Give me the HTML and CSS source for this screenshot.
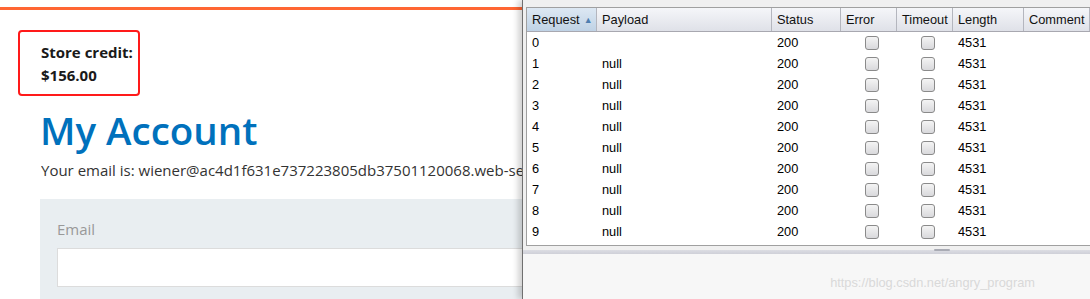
FILE: index.html
```html
<!DOCTYPE html>
<html lang="en">
<head>
  <meta charset="UTF-8" />
  <title>My Account - Intruder results</title>
  <link rel="stylesheet" href="styles.css">
</head>
<body>
  <!-- Lab page, left side -->
  <div class="page">
    <div class="top-line"></div>
    <div class="credit">
      <p>Store credit:</p>
      <p>$156.00</p>
    </div>
    <h1>My Account</h1>
    <p class="email">Your email is: wiener@ac4d1f631e737223805db37501120068.web-security-academy.net</p>
    <div class="panel">
      <label>Email</label>
      <div class="input"></div>
    </div>
  </div>

  <!-- Intruder results window -->
  <div class="window">
    <div class="results">
      <div class="row head">
        <div class="cell sorted">Request <span class="arrow">▲</span></div>
        <div class="cell">Payload</div>
        <div class="cell">Status</div>
        <div class="cell">Error</div>
        <div class="cell">Timeout</div>
        <div class="cell">Length</div>
        <div class="cell">Comment</div>
      </div>
      <div id="rows"></div>
    </div>
    <div class="splitter"><span class="grip"></span></div>
    <div class="lower">
      <span class="mark">https://blog.csdn.net/angry_program</span>
    </div>
  </div>

  <script>
    const rows = document.getElementById("rows");
    for (let i = 0; i < 10; i++) {
      const row = document.createElement("div");
      row.className = "row";
      row.innerHTML =
        '<div class="cell">' + i + '</div>' +
        '<div class="cell">' + (i === 0 ? '' : 'null') + '</div>' +
        '<div class="cell">200</div>' +
        '<div class="cell check"><span class="box"></span></div>' +
        '<div class="cell check"><span class="box"></span></div>' +
        '<div class="cell">4531</div>' +
        '<div class="cell"></div>';
      rows.appendChild(row);
    }
  </script>
</body>
</html>
```

FILE: styles.css
```css
* {
  box-sizing: border-box;
  margin: 0;
  padding: 0;
}

body {
  width: 1090px;
  height: 299px;
  overflow: hidden;
  display: flex;
  background: #fff;
}

/* Lab page */
.page {
  width: 522px;
  flex-shrink: 0;
  overflow: hidden;
  font-family: "Open Sans", sans-serif;
  color: #333;
}

.top-line {
  margin-top: 7px;
  height: 3px;
  background: #ff6633;
}

.credit {
  margin: 20px 0 0 18px;
  width: 122px;
  height: 66px;
  border: 2.5px solid #ff1a1a;
  border-radius: 4px;
  padding: 9px 0 0 21px;
  font-weight: 700;
  font-size: 15px;
  line-height: 23px;
  color: #1a1a1a;
  white-space: nowrap;
}

h1 {
  margin: 11px 0 0 40px;
  font-size: 38.5px;
  font-weight: 600;
  line-height: 46px;
  color: #0071bc;
  white-space: nowrap;
}

.email {
  margin: 5px 0 0 41px;
  font-size: 15px;
  line-height: 24px;
  white-space: nowrap;
  overflow: hidden;
}

.panel {
  margin: 17px 0 0 40px;
  height: 110px;
  background: #e9eef1;
  padding: 18px 0 0 17px;
}

.panel label {
  display: block;
  font-size: 15px;
  color: #999;
  line-height: 24px;
}

.input {
  margin-top: 7px;
  height: 39px;
  background: #fff;
  border: 1px solid #dcdcdc;
  border-right: none;
}

/* Intruder window */
.window {
  flex: 1;
  display: flex;
  flex-direction: column;
  background: #f0f0f0;
  border-left: 1px solid #707070;
  box-shadow: -4px 0 6px rgba(0, 0, 0, 0.18);
  padding: 7px 0 0 3px;
  font-family: "Liberation Sans", Arial, sans-serif;
  font-size: 12.8px;
  color: #000;
  position: relative;
}

.results {
  background: #fff;
  border: 1px solid #a0a0a0;
  border-right: none;
  height: 239px;
}

.row {
  display: grid;
  grid-template-columns: 70px 175px 69px 56px 56px 71px 1fr;
  height: 21px;
  align-items: center;
}

.row .cell {
  padding-left: 5px;
  white-space: nowrap;
}

.head {
  height: 24px;
  background: linear-gradient(#f5f6f9, #dfe1e8);
  border-bottom: 1px solid #a8a8b0;
  color: #111;
}

.head .cell {
  height: 100%;
  display: flex;
  align-items: center;
  border-right: 1px solid #b4b6be;
}

.head .sorted {
  background: linear-gradient(#dde8f3, #bfd2e5);
}

.arrow {
  font-size: 9px;
  color: #4f7fb0;
  margin-left: 4px;
}

.check {
  display: flex;
  justify-content: center;
}

.box {
  width: 14px;
  height: 14px;
  border: 1px solid #8a8a8a;
  border-radius: 3px;
  background: linear-gradient(#f4f4f4, #d9d9dc);
}

.splitter {
  margin: 4px 0 0 -3px;
  height: 4px;
  background: linear-gradient(#dcdde3, #cfd0d8);
  position: relative;
}

.grip {
  position: absolute;
  left: 411px;
  top: -1px;
  width: 16px;
  height: 2px;
  background: #a9abb4;
  border-radius: 1px;
}

.lower {
  flex: 1;
  margin-left: -3px;
  background: #f7f7f7;
  position: relative;
}

.mark {
  position: absolute;
  right: 55px;
  bottom: 9px;
  font-size: 12.8px;
  color: #d9d9d9;
}
```
